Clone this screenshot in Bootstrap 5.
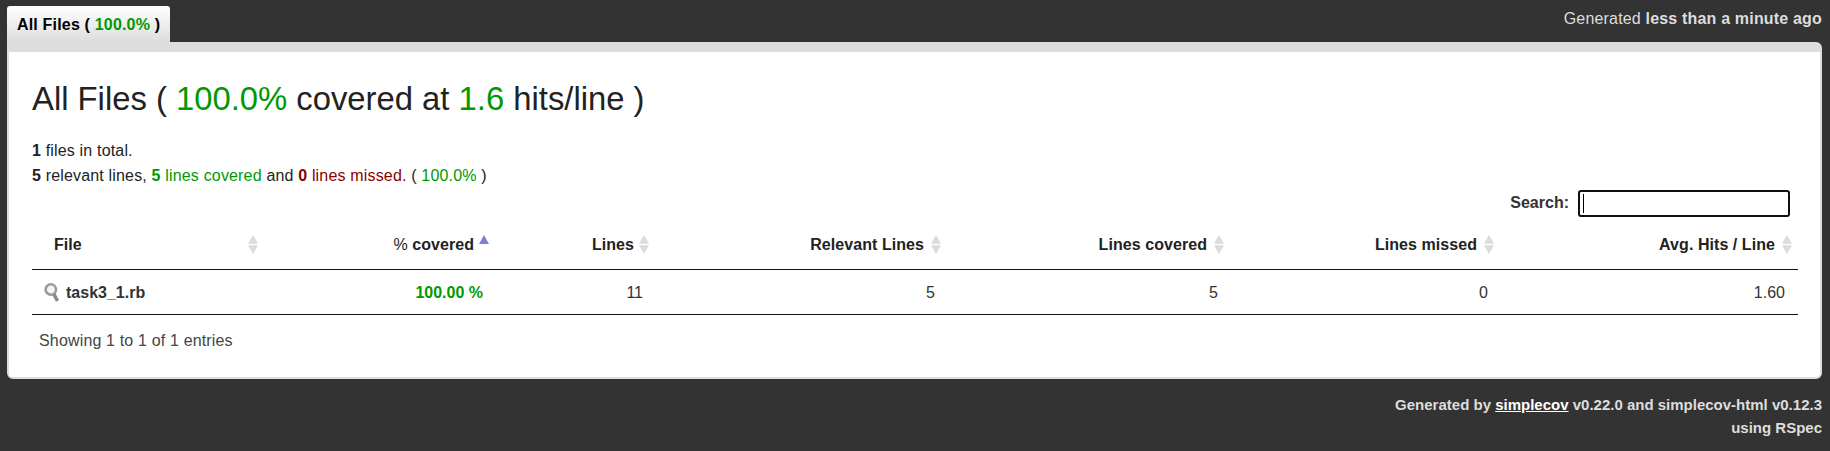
<!DOCTYPE html>
<html lang="en">
<head>
<meta charset="utf-8">
<title>Code coverage</title>
<meta name="viewport" content="width=device-width, initial-scale=1">
<link href="https://cdn.jsdelivr.net/npm/bootstrap@5.3.0/dist/css/bootstrap.min.css" rel="stylesheet">
<style>
  body { background: #333; color: #222; font: 16px/25px "Liberation Sans", Arial, sans-serif; padding: 0 8px 0 7px; }
  .topbar { height: 42px; letter-spacing: .18px; }
  .file-tab { width: 163px; height: 36px; padding-left: 10px; line-height: 37px; color: #000; background: linear-gradient(#fff, #ddd); border-radius: 3px 3px 0 0; white-space: nowrap; }
  .stamp { color: #ddd; line-height: 37px; }
  .panel { height: 337px; background: #fff; border: 2px solid #ddd; border-top-width: 10px; border-radius: 0 6px 6px 6px; padding: 27px 22px 0 23px; }
  .green, .coverage td.green { color: #090; }
  .red { color: #800; }
  .panel h2 { font-size: 32.8px; line-height: 40px; color: #222; margin: 0 0 19px; }
  .totals { letter-spacing: .17px; }
  .search-row { height: 27px; margin: 2px 8px 1px 0; color: #333; }
  .search-row b { margin-right: 9px; }
  .search-box { width: 212px; height: 27px; border: 2px solid #101010; border-radius: 3px; background: #fff; }
  .search-caret { left: 3px; top: 2px; width: 1px; height: 19px; background: #000; }
  .coverage { table-layout: fixed; width: 1766px; border-collapse: separate; border-spacing: 0; margin: 0; }
  .coverage th { height: 52px; padding: 1px 23px 0 22px; border-bottom: 1px solid #111; color: #222; letter-spacing: .06px; }
  .coverage th.sorted { padding-right: 21px; }
  .coverage td { height: 45px; padding: 0 12px 0 11px; border-bottom: 1px solid #111; color: #333; }
  .coverage td:last-child { padding-right: 13px; }
  .lens { margin: 0 6px 0 1px; }
  .sorter { right: 6px; top: 17px; width: 10px; height: 19px; }
  .summary { color: #444; padding: 13px 0 0 7px; letter-spacing: .16px; }
  .credits { width: 460px; font-size: 15px; line-height: 23px; color: #ddd; margin-top: 14px; }
  .credits a { color: #fff; }
</style>
</head>
<body>
<svg class="d-none" aria-hidden="true">
  <symbol id="both" viewBox="0 0 10 19"><path d="M5 0 10 8.700H0ZM0 10.200H10L5 19Z" fill="#dcdcdc"/></symbol>
  <symbol id="asc" viewBox="0 0 10 19"><path d="M5 0 10 9H0Z" fill="#8080d8"/></symbol>
</svg>
<header class="topbar d-flex justify-content-between">
  <div class="file-tab fw-bold align-self-end">All Files ( <span class="green">100.0%</span> )</div>
  <div class="stamp">Generated <b>less than a minute ago</b></div>
</header>
<main class="panel">
  <h2 class="fw-normal">All Files ( <span class="green">100.0%</span> covered at <span class="green">1.6</span> hits/line )</h2>
  <div class="totals"><b>1</b> files in total.</div>
  <div class="totals"><b>5</b> relevant lines, <span class="green"><b>5</b> lines covered</span> and <span class="red"><b>0</b> lines missed.</span> ( <span class="green">100.0%</span> )</div>
  <div class="search-row d-flex justify-content-end">
    <b>Search:</b>
    <div class="search-box position-relative" role="searchbox"><span class="search-caret position-absolute"></span></div>
  </div>
  <table class="coverage">
    <colgroup><col width="232"><col width="231"><col width="160"><col width="292"><col width="283"><col width="270"><col width="298"></colgroup>
    <thead>
      <tr class="text-end">
        <th class="position-relative text-start">File<svg class="sorter position-absolute"><use href="#both"/></svg></th>
        <th class="position-relative sorted"><span class="fw-normal">%</span> covered<svg class="sorter position-absolute"><use href="#asc"/></svg></th>
        <th class="position-relative sorted">Lines<svg class="sorter position-absolute"><use href="#both"/></svg></th>
        <th class="position-relative">Relevant Lines<svg class="sorter position-absolute"><use href="#both"/></svg></th>
        <th class="position-relative">Lines covered<svg class="sorter position-absolute"><use href="#both"/></svg></th>
        <th class="position-relative">Lines missed<svg class="sorter position-absolute"><use href="#both"/></svg></th>
        <th class="position-relative">Avg. Hits / Line<svg class="sorter position-absolute"><use href="#both"/></svg></th>
      </tr>
    </thead>
    <tbody>
      <tr class="text-end">
        <td class="text-start fw-bold"><div class="d-flex align-items-center"><svg width="16" height="19" viewBox="0 0 16 19" class="lens"><circle cx="6.800" cy="6.500" r="5.200" fill="#f4f4f4" stroke="#999" stroke-width="2.600"/><path d="m9.800 11 3.700 7" stroke="#8a8a8a" stroke-width="3.600"/></svg>task3_1.rb</div></td>
        <td class="fw-bold green">100.00 %</td>
        <td>11</td><td>5</td><td>5</td><td>0</td><td>1.60</td>
      </tr>
    </tbody>
  </table>
  <div class="summary">Showing 1 to 1 of 1 entries</div>
</main>
<footer class="credits fw-bold text-end ms-auto">Generated by <a href="#">simplecov</a> v0.22.0 and simplecov-html v0.12.3<br>using RSpec</footer>
<script src="https://cdn.jsdelivr.net/npm/bootstrap@5.3.0/dist/js/bootstrap.bundle.min.js"></script>
</body>
</html>
